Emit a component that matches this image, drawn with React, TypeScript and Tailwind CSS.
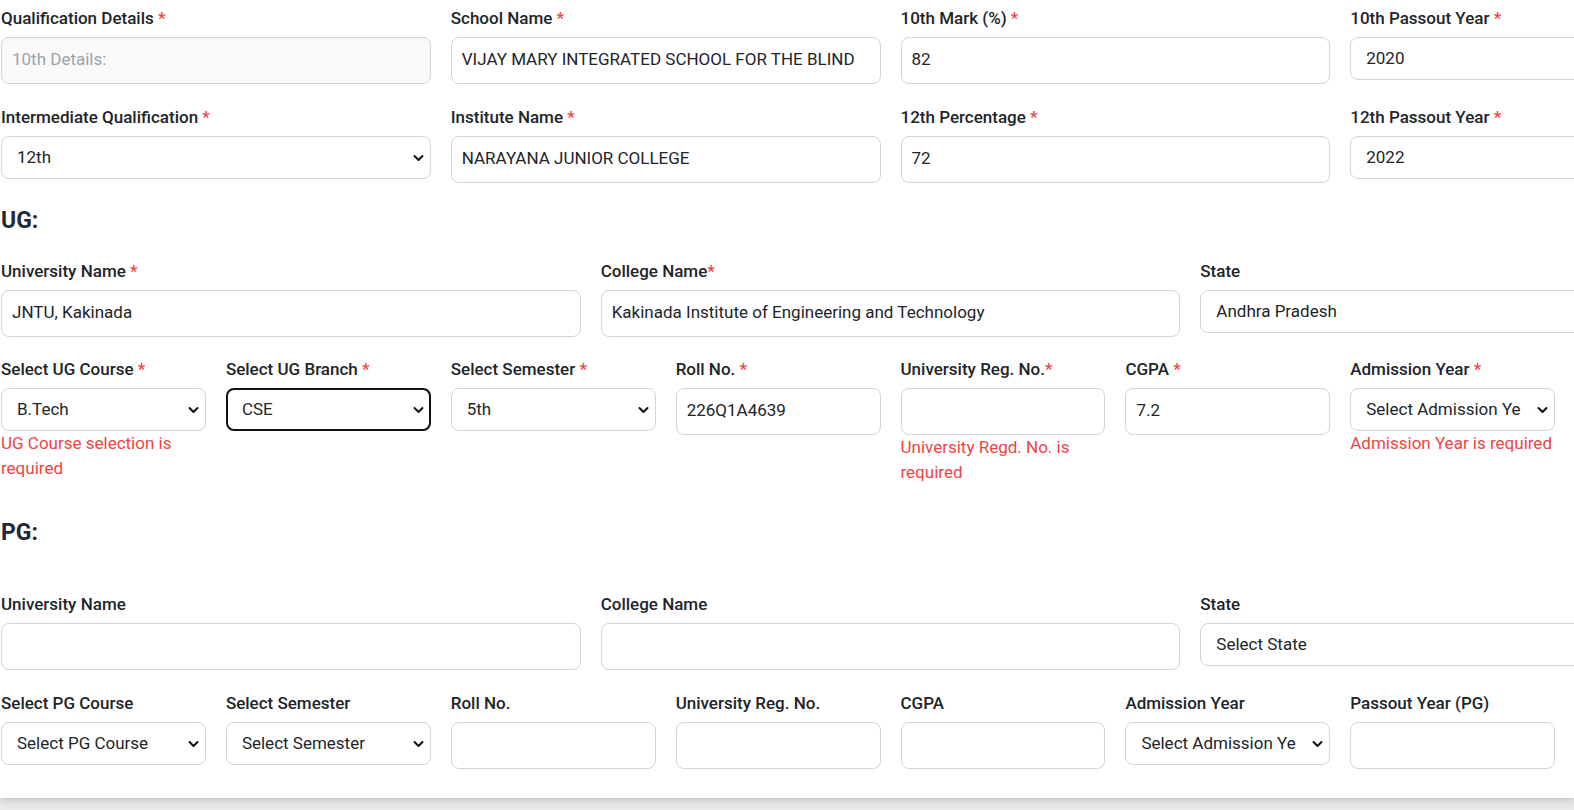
import React from "react";

type LabelProps = { text: string; req?: boolean; tight?: boolean };

function Label({ text, req, tight }: LabelProps) {
  return (
    <label className="block h-6 leading-6 mb-[7px] text-[17px] font-medium text-[#212529] whitespace-nowrap">
      {text}
      {req && <span className="text-[#ef4444]">{tight ? "*" : " *"}</span>}
    </label>
  );
}

function TextInput({ value = "", disabled }: { value?: string; disabled?: boolean }) {
  return (
    <input
      className={
        disabled
          ? "block w-full h-[47px] rounded-lg border border-[#d1d5db] bg-[#f9f9f9] px-[10px] pb-[3px] text-[17px] text-[#9ca3af] outline-none"
          : "block w-full h-[47px] rounded-lg border border-[#d1d5db] bg-white px-[10px] pb-[3px] text-[17px] text-[#212529] outline-none"
      }
      defaultValue={value}
      readOnly
      disabled={disabled}
    />
  );
}

function Chevron() {
  return (
    <svg
      className="pointer-events-none absolute right-[7px] top-1/2 -translate-y-1/2"
      width="11"
      height="8"
      viewBox="0 0 11 8"
      fill="none"
    >
      <path d="M1.5 2l4 4 4-4" stroke="#111" strokeWidth="2" strokeLinecap="round" strokeLinejoin="round" />
    </svg>
  );
}

function Select({ value, focused }: { value: string; focused?: boolean }) {
  return (
    <div className="relative">
      <select
        className={
          focused
            ? "block w-full h-[43px] appearance-none rounded-lg border-2 border-[#111] bg-white pl-[14px] pr-[32px] text-[17px] text-[#212529] outline-none"
            : "block w-full h-[43px] appearance-none rounded-lg border border-[#d1d5db] bg-white pl-[15px] pr-[33px] text-[17px] text-[#212529] outline-none"
        }
        defaultValue={value}
      >
        <option value={value}>{value}</option>
      </select>
      <Chevron />
    </div>
  );
}

function ErrorText({ text }: { text: string }) {
  return <p className="text-[17px] leading-[25px] text-[#ef4444]">{text}</p>;
}

export default function App() {
  return (
    <div className="w-full h-[810px] overflow-hidden bg-[#e8e9eb] font-[Roboto,sans-serif]">
      <div className="w-full h-[798px] overflow-hidden bg-white shadow-[0_2px_8px_rgba(0,0,0,0.18)]">
        <div className="w-[1780px] pl-px pt-[6px]">
          {/* 10th / 12th */}
          <div className="grid grid-cols-4 gap-x-5 gap-y-[21px]">
            <div>
              <Label text="Qualification Details" req />
              <TextInput value="10th Details:" disabled />
            </div>
            <div>
              <Label text="School Name" req />
              <TextInput value="VIJAY MARY INTEGRATED SCHOOL FOR THE BLIND" />
            </div>
            <div>
              <Label text="10th Mark (%)" req />
              <TextInput value="82" />
            </div>
            <div>
              <Label text="10th Passout Year" req />
              <Select value="2020" />
            </div>
            <div>
              <Label text="Intermediate Qualification" req />
              <Select value="12th" />
            </div>
            <div>
              <Label text="Institute Name" req />
              <TextInput value="NARAYANA JUNIOR COLLEGE" />
            </div>
            <div>
              <Label text="12th Percentage" req />
              <TextInput value="72" />
            </div>
            <div>
              <Label text="12th Passout Year" req />
              <Select value="2022" />
            </div>
          </div>

          {/* UG */}
          <h2 className="mt-6 h-7 leading-7 text-[23px] font-bold text-[#1f2937]">UG:</h2>
          <div className="mt-6 grid grid-cols-3 gap-x-5">
            <div>
              <Label text="University Name" req />
              <TextInput value="JNTU, Kakinada" />
            </div>
            <div>
              <Label text="College Name" req tight />
              <TextInput value="Kakinada Institute of Engineering and Technology" />
            </div>
            <div>
              <Label text="State" />
              <Select value="Andhra Pradesh" />
            </div>
          </div>
          <div className="mt-5 grid grid-cols-8 gap-x-5 items-start">
            <div>
              <Label text="Select UG Course" req />
              <Select value="B.Tech" />
              <ErrorText text="UG Course selection is required" />
            </div>
            <div>
              <Label text="Select UG Branch" req />
              <Select value="CSE" focused />
            </div>
            <div>
              <Label text="Select Semester" req />
              <Select value="5th" />
            </div>
            <div>
              <Label text="Roll No." req />
              <TextInput value="226Q1A4639" />
            </div>
            <div>
              <Label text="University Reg. No." req tight />
              <TextInput value="" />
              <ErrorText text="University Regd. No. is required" />
            </div>
            <div>
              <Label text="CGPA" req />
              <TextInput value="7.2" />
            </div>
            <div>
              <Label text="Admission Year" req />
              <Select value="Select Admission Year" />
              <ErrorText text="Admission Year is required" />
            </div>
          </div>

          {/* PG */}
          <h2 className="mt-[34px] h-7 leading-7 text-[23px] font-bold text-[#1f2937]">PG:</h2>
          <div className="mt-[45px] grid grid-cols-3 gap-x-5">
            <div>
              <Label text="University Name" />
              <TextInput value="" />
            </div>
            <div>
              <Label text="College Name" />
              <TextInput value="" />
            </div>
            <div>
              <Label text="State" />
              <Select value="Select State" />
            </div>
          </div>
          <div className="mt-[21px] grid grid-cols-8 gap-x-5 items-start">
            <div>
              <Label text="Select PG Course" />
              <Select value="Select PG Course" />
            </div>
            <div>
              <Label text="Select Semester" />
              <Select value="Select Semester" />
            </div>
            <div>
              <Label text="Roll No." />
              <TextInput value="" />
            </div>
            <div>
              <Label text="University Reg. No." />
              <TextInput value="" />
            </div>
            <div>
              <Label text="CGPA" />
              <TextInput value="" />
            </div>
            <div>
              <Label text="Admission Year" />
              <Select value="Select Admission Year" />
            </div>
            <div>
              <Label text="Passout Year (PG)" />
              <TextInput value="" />
            </div>
          </div>
        </div>
      </div>
    </div>
  );
}
